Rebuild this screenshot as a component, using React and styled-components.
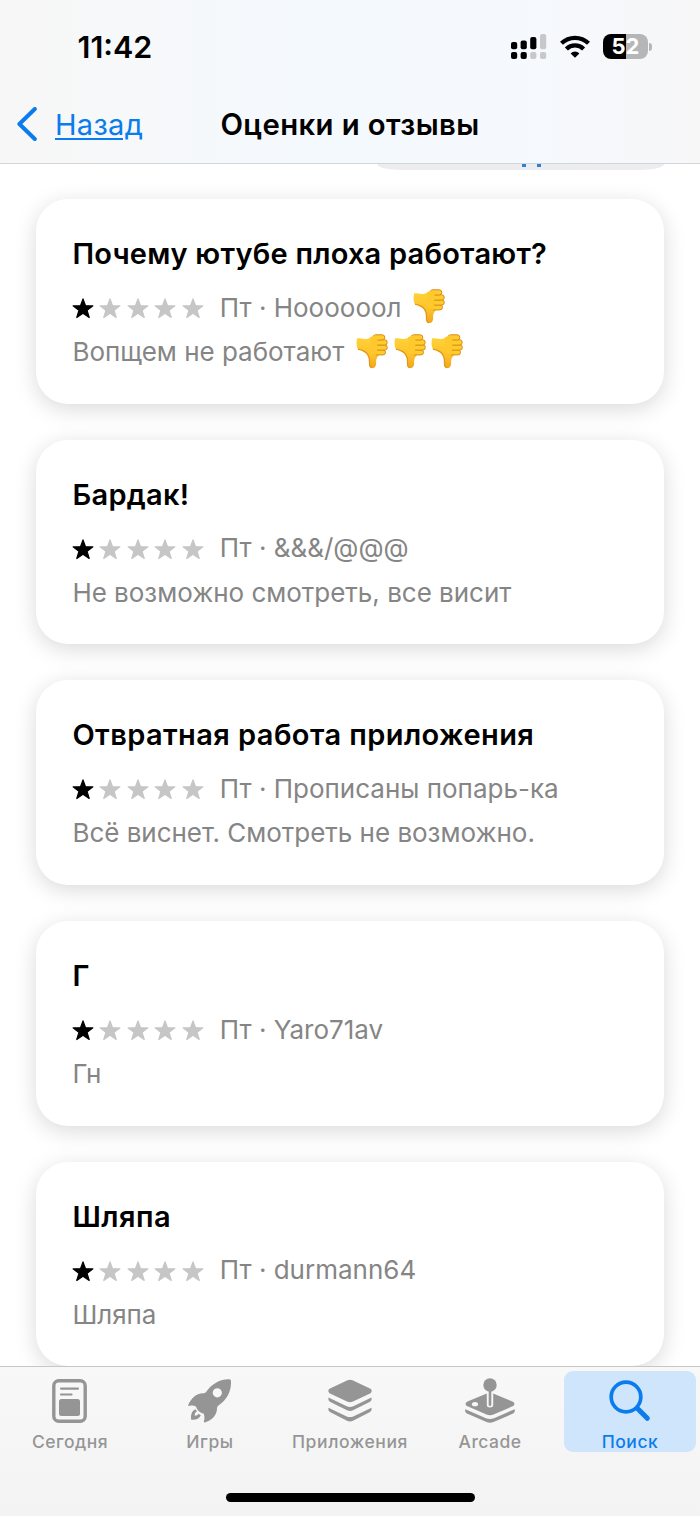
import React from 'react';
import styled, { createGlobalStyle } from 'styled-components';

const blue = '#0a7cee';
const grey = '#959595';

const reviews = [
	{
		id: 1,
		title: 'Почему ютубе плоха работают?',
		track: 0.22,
		author: 'Ноооооол',
		authorThumbs: 1,
		text: 'Вопщем не работают',
		textThumbs: 3,
	},
	{
		id: 2,
		title: 'Бардак!',
		track: 0.3,
		author: '&&&/@@@',
		text: 'Не возможно смотреть, все висит',
	},
	{
		id: 3,
		title: 'Отвратная работа приложения',
		track: 0.42,
		author: 'Прописаны попарь-ка',
		text: 'Всё виснет. Смотреть не возможно.',
	},
	{ id: 4, title: 'Г', track: 0, author: 'Yaro71av', text: 'Гн' },
	{ id: 5, title: 'Шляпа', track: 0.5, author: 'durmann64', text: 'Шляпа' },
];

// Icons
const Signal = () => (
	<svg width='36' height='26' viewBox='0 0 36 26'>
		<rect x='0' y='8' width='6.2' height='7.2' rx='2' />
		<rect x='9.6' y='6.4' width='6.2' height='8.8' rx='2' />
		<rect x='19.2' y='3' width='6.2' height='12.2' rx='2' />
		<rect x='0' y='18' width='6.2' height='7' rx='2' />
		<rect x='9.6' y='18' width='6.2' height='7' rx='2' />
		<g fill='#c6c8cb'>
			<rect x='29' y='0' width='6.2' height='15.2' rx='2' />
			<rect x='19.2' y='18' width='6.2' height='7' rx='2' />
			<rect x='29' y='18' width='6.2' height='7' rx='2' />
		</g>
	</svg>
);

const Wifi = () => (
	<svg width='30' height='23' viewBox='0 0 30 23'>
		<g fill='none' stroke='#000' strokeWidth='4.3'>
			<path d='M1.5 8.3a19.4 19.4 0 0 1 27 0' />
			<path d='M6.4 13.9a12.2 12.2 0 0 1 17.2 0' />
		</g>
		<path d='M15 22.8l-4.4-4.4a6.2 6.2 0 0 1 8.8 0z' />
	</svg>
);

const Chevron = () => (
	<svg width='20' height='34' viewBox='0 0 20 34'>
		<path
			d='M17.8 2L2.4 17l15.4 15'
			fill='none'
			stroke={blue}
			strokeWidth='4'
			strokeLinecap='round'
			strokeLinejoin='round'
		/>
	</svg>
);

const Star = ({ filled }) => (
	<svg width='22' height='21' viewBox='0 0 22 21'>
		<path
			d='M11 .9l2.5 6.8 7.4.2-5.8 4.5 2.1 7.1-6.2-4.2-6.2 4.2 2.1-7.1L1.1 7.9l7.4-.2z'
			fill={filled ? '#000' : '#c6c6c6'}
			stroke={filled ? '#000' : '#c6c6c6'}
			strokeWidth='1.2'
			strokeLinejoin='round'
		/>
	</svg>
);

const ThumbDown = () => (
	<svg width='32' height='35' viewBox='0 0 32 35' role='img' aria-label='👎'>
		<defs>
			<linearGradient id='skin' x1='0' y1='0' x2='0' y2='1'>
				<stop offset='0' stopColor='#ffd338' />
				<stop offset='.6' stopColor='#fdc12a' />
				<stop offset='1' stopColor='#f2a51c' />
			</linearGradient>
		</defs>
		<path
			d='M1.2 4.3C.3 7.5.2 11.5 1.8 15.2c3.4 1 7.3 2.5 9.4 5.6 1.7 2.5 2.4 4.3 2 7.4-.4 3.2.3 5.7 2.9 5.9 2.8.1 4.2-2.4 4-5.6-.2-3.2.9-5 2.4-7l6-3-2-14.5-8-1.2c-3 .1-5.3 2-8.3 2.2-3 .2-6.3-.7-9-.7z'
			fill='url(#skin)'
		/>
		<g fill='#ffcc2e' stroke='#d88c18' strokeWidth='1'>
			<rect x='17.5' y='15.7' width='12' height='5.2' rx='2.6' />
			<rect x='18' y='10.8' width='13.3' height='5.3' rx='2.6' />
			<rect x='18' y='5.7' width='13.2' height='5.4' rx='2.6' />
			<rect x='17' y='.8' width='11.8' height='5.2' rx='2.6' />
		</g>
		<path d='M14 3.3l5-2 2.5 3.2-.5 13.5-1 3.2-5-2z' fill='#ffc92d' />
		<path
			d='M2 15.2c4 .8 7.5 2.2 9.6 5.2 1.6 2.5 2.3 4.4 1.9 7.5-.3 3.3.3 5.4 2.3 5.9'
			fill='none'
			stroke='#e0961a'
			strokeWidth='1.2'
		/>
	</svg>
);

const TodayIcon = () => (
	<svg width='36' height='44' viewBox='0 0 36 44'>
		<rect
			x='1.8'
			y='1.8'
			width='31.4'
			height='40.4'
			rx='5'
			fill='none'
			stroke='currentColor'
			strokeWidth='3.4'
		/>
		<path
			d='M9 9.6h17M9 15.5h10.5'
			stroke='currentColor'
			strokeWidth='2.2'
			strokeLinecap='round'
		/>
		<rect x='7' y='20' width='21' height='17' rx='2.5' fill='currentColor' />
	</svg>
);

const RocketIcon = () => (
	<svg width='44' height='44' viewBox='0 0 44 44' fill='currentColor'>
		<path
			fillRule='evenodd'
			d='M41.5.3C33-.2 24.5 4.2 18.3 12.7c-1 1.3-2 1.6-3.3 1.6C8 14.4 3 19.5.3 26c-.3.7.1 1.2.8 1 2.7-.8 5-.6 7 .8 1 3.4 4 6.3 7.6 6.8.9 2.5 1 5.2.2 7.8-.2.8.2 1.3.9 1.1 6.7-2 12-6.8 12.2-13.7 0-1.3.3-2.3 1.5-3.3C39 20.5 43.5 12 43 1.9c-.1-1-.5-1.5-1.5-1.6zM29.3 9.2a4.6 4.6 0 1 1 0 9.2 4.6 4.6 0 0 1 0-9.2z'
		/>
		<path d='M7.6 30.3C3.6 31.7 2.6 36 3.2 40.7c4.6.4 8.1-.6 9.6-4.4l-2.3-1.5c-.8 1.5-2.1 2-3.8 1.8-.2-1.7.3-3.3 2.3-4.2z' />
	</svg>
);

const AppsIcon = () => (
	<svg width='44' height='44' viewBox='0 0 44 44' fill='currentColor'>
		<path d='M19 1.5c2-.9 4-.9 6 0l17 8.1c2.2 1.1 2.2 3.7 0 4.8l-17 8.1c-2 .9-4 .9-6 0L2 14.4c-2.2-1.1-2.2-3.7 0-4.8z' />
		<path d='M.5 18.6l17.7 8.4c2.5 1.2 5.1 1.2 7.6 0l17.7-8.4c.5 2-.3 3.7-1.9 4.5L25 31.3c-2 1-4 1-6 0L2.4 23.1C.8 22.3 0 20.6.5 18.6z' />
		<path d='M.5 28.8l17.7 8.4c2.5 1.2 5.1 1.2 7.6 0l17.7-8.4c.5 2-.3 3.7-1.9 4.5L25 41.7c-2 1-4 1-6 0L2.4 33.3C.8 32.5 0 30.8.5 28.8z' />
	</svg>
);

const ArcadeIcon = () => (
	<svg width='50' height='46' viewBox='0 0 50 46' fill='currentColor'>
		<circle cx='25' cy='7' r='6.7' />
		<path
			fillRule='evenodd'
			d='M21.8 15.5v11.7c0 3 6.4 3 6.4 0V15.5l19.3 8c2.5 1.2 2.5 3.6 0 4.8L28.5 36.6c-2.3 1-4.7 1-7 0L2.5 28.3c-2.5-1.2-2.5-3.6 0-4.8zM10 24c-4.2 0-4.2 4.3 0 4.3s4.2-4.3 0-4.3z'
		/>
		<path d='M23.7 13h2.6v14c0 1.2-2.6 1.2-2.6 0z' />
		<path d='M.3 31.2l20.7 9c2.6 1.1 5.3 1.1 8 0l20.7-9c.5 2.2-.3 3.7-2.2 4.6l-19 8.3c-2.3 1-4.7 1-7 0l-19-8.3C.6 34.9-.2 33.4.3 31.2z' />
	</svg>
);

const SearchIcon = () => (
	<svg width='42' height='42' viewBox='0 0 42 42' fill='none' stroke='currentColor'>
		<circle cx='17' cy='17' r='14.8' strokeWidth='3.7' />
		<path d='M28.5 28.5l9.8 9.8' strokeWidth='5' strokeLinecap='round' />
	</svg>
);

const tabs = [
	{ label: 'Сегодня', icon: <TodayIcon />, track: 0.5 },
	{ label: 'Игры', icon: <RocketIcon />, track: 0.5 },
	{ label: 'Приложения', icon: <AppsIcon />, track: 0.6 },
	{ label: 'Arcade', icon: <ArcadeIcon />, track: 0.45 },
	{ label: 'Поиск', icon: <SearchIcon />, track: 0.5, active: true },
];

const Thumbs = ({ count = 0 }) =>
	count > 0 && (
		<ThumbGroup>
			{Array.from({ length: count }, (_, i) => (
				<ThumbDown key={i} />
			))}
		</ThumbGroup>
	);

// Exported Component
const App = () => {
	return (
		<Screen>
			<GlobalStyle />
			<Header>
				<StatusBar>
					<Time>11:42</Time>
					<StatusIcons>
						<Signal />
						<Wifi />
						<BatteryWrap>
							<Battery>52</Battery>
							<BatteryTip />
						</BatteryWrap>
					</StatusIcons>
				</StatusBar>
				<NavBar>
					<Back>
						<Chevron />
						<BackLabel>Назад</BackLabel>
					</Back>
					<Heading>Оценки и отзывы</Heading>
				</NavBar>
			</Header>
			<Content>
				<SortButton>
					<Descender />
					<Descender />
				</SortButton>
				{reviews.map((e) => (
					<Card key={e.id}>
						<CardTitle $track={e.track}>{e.title}</CardTitle>
						<Meta>
							<Stars>
								{[1, 2, 3, 4, 5].map((n) => (
									<Star key={n} filled={n === 1} />
								))}
							</Stars>
							<span>Пт · {e.author}</span>
							<Thumbs count={e.authorThumbs} />
						</Meta>
						<Body>
							<span>{e.text}</span>
							<Thumbs count={e.textThumbs} />
						</Body>
					</Card>
				))}
			</Content>
			<Footer>
				<TabBar>
					{tabs.map((e) => (
						<Tab key={e.label} $active={e.active}>
							<IconBox>{e.icon}</IconBox>
							<TabLabel $track={e.track}>{e.label}</TabLabel>
						</Tab>
					))}
				</TabBar>
				<HomeIndicator />
			</Footer>
		</Screen>
	);
};

const GlobalStyle = createGlobalStyle`
	body {
		margin: 0;
		background: #fff;
	}
	* {
		box-sizing: border-box;
	}
	svg {
		display: block;
		flex-shrink: 0;
	}
`;

const Screen = styled.div`
	width: 700px;
	height: 1516px;
	display: flex;
	flex-direction: column;
	overflow: hidden;
	background: #fff;
	color: #000;
	font-family: Inter, 'Liberation Sans', sans-serif;
`;

const Header = styled.header`
	height: 164px;
	flex-shrink: 0;
	border-bottom: 1px solid #d3d6d8;
	background: linear-gradient(
		90deg,
		#f7f7f7 0%,
		#f7f8f9 15%,
		#f4f9fe 45%,
		#f5f9fe 70%,
		#f7f7f8 100%
	);
`;

const StatusBar = styled.div`
	height: 94px;
	padding: 0 48px 0 77.5px;
	display: flex;
	justify-content: space-between;
	align-items: center;
`;

const Time = styled.div`
	margin-bottom: 2px;
	font-size: 30.5px;
	font-weight: 600;
`;

const StatusIcons = styled.div`
	display: flex;
	align-items: center;
	gap: 13px;
	margin-bottom: 1px;
`;

const BatteryWrap = styled.div`
	display: flex;
	align-items: center;
	gap: 1px;
`;

const Battery = styled.div`
	width: 45px;
	height: 25px;
	border-radius: 8px;
	background: linear-gradient(90deg, #000 51%, #b5b6b8 51%);
	color: #fff;
	font-size: 22px;
	font-weight: 700;
	line-height: 25px;
	text-align: center;
`;

const BatteryTip = styled.div`
	width: 3px;
	height: 8px;
	border-radius: 0 4px 4px 0;
	background: #b5b6b8;
`;

const NavBar = styled.div`
	height: 60px;
	padding: 0 17px;
	display: grid;
	grid-template-columns: 1fr auto 1fr;
	align-items: center;
`;

const Back = styled.div`
	display: flex;
	align-items: center;
	gap: 18px;
	color: ${blue};
`;

const BackLabel = styled.span`
	font-size: 29px;
	letter-spacing: 0.3px;
	text-decoration: underline;
	text-decoration-thickness: 2px;
	text-underline-offset: 3px;
`;

const Heading = styled.h1`
	margin: 0;
	font-size: 29.3px;
	font-weight: 600;
	letter-spacing: 0.4px;
`;

const Content = styled.main`
	height: 1202px;
	flex-shrink: 0;
	overflow: hidden;
	padding: 0 36px;
	display: flex;
	flex-direction: column;
`;

// Only the lower edge of the sort button shows under the header
const SortButton = styled.div`
	align-self: flex-end;
	width: 287px;
	height: 6px;
	margin-bottom: 29px;
	flex-shrink: 0;
	display: flex;
	gap: 11px;
	padding-left: 145px;
	border-radius: 0 0 24px 24px / 0 0 6px 6px;
	background: #ededef;
`;

const Descender = styled.i`
	width: 4px;
	height: 3px;
	background: #2f7fd8;
`;

const Card = styled.article`
	height: 204.7px;
	margin-bottom: 36px;
	flex-shrink: 0;
	padding: 36px 36px 36px 36.4px;
	border-radius: 32px;
	background: #fff;
	box-shadow: 0 5px 22px rgba(0, 0, 0, 0.15);
`;

const CardTitle = styled.h2`
	margin: 0 0 14px;
	font-size: 29px;
	font-weight: 600;
	line-height: 38px;
	letter-spacing: ${(props) => props.$track}px;
	white-space: nowrap;
`;

const ThumbGroup = styled.span`
	display: flex;
	gap: 5.8px;
	margin: 0 0 0 11.5px;
`;

const Meta = styled.div`
	height: 40px;
	display: flex;
	align-items: center;
	color: #858585;
	font-size: 26px;
	white-space: nowrap;

	${ThumbGroup} {
		margin-top: -1px;
	}
`;

const Stars = styled.div`
	display: flex;
	gap: 5.6px;
	margin: 3px 15.7px 0 -0.7px;
`;

const Body = styled(Meta)`
	margin-top: 4.5px;
	letter-spacing: -0.02px;
`;

const Footer = styled.footer`
	height: 150px;
	flex-shrink: 0;
	border-top: 1px solid #c6c6c6;
	background: linear-gradient(180deg, #f8f8f8, #f3f3f3);
`;

const TabBar = styled.nav`
	display: grid;
	grid-template-columns: repeat(5, 1fr);
	padding-top: 4px;
`;

const Tab = styled.div`
	height: 81px;
	margin: 0 4px;
	display: flex;
	flex-direction: column;
	align-items: center;
	border-radius: 9px;
	color: ${(props) => (props.$active ? blue : grey)};
	background: ${(props) => (props.$active ? '#cfe5fb' : 'transparent')};
`;

const IconBox = styled.div`
	height: 60px;
	flex-shrink: 0;
	display: flex;
	align-items: center;
	margin-right: 1px;
`;

const TabLabel = styled.span`
	font-size: 17.5px;
	font-weight: 500;
	line-height: 21px;
	letter-spacing: ${(props) => props.$track}px;
`;

const HomeIndicator = styled.div`
	width: 249px;
	height: 9px;
	margin: 41px auto 0;
	border-radius: 5px;
	background: #000;
`;

export default App;
